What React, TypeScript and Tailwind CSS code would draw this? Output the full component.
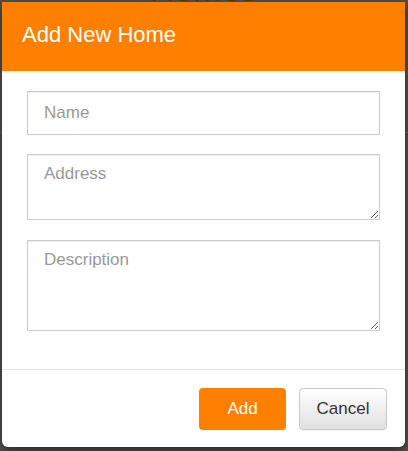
import React from "react"

export default function App() {
  return (
    <div className="relative w-[408px] h-[451px] overflow-hidden bg-[#505050] font-['Liberation_Sans',Arial,sans-serif]">
      {/* page behind the overlay */}
      <div className="absolute left-0 right-0 top-[-26px] text-center text-[34px] leading-[30px] text-[#6b3600]">
        Homes
      </div>
      <div className="absolute left-0 right-0 top-[132px] h-px bg-[#646464]" />

      <div className="relative pl-[2px] pt-[2px]">
        <div className="w-[403px] bg-white rounded-b-[6px] shadow-[0_3px_9px_rgba(0,0,0,0.5)]">
          <div className="h-[69px] bg-[#ff8000] flex items-center pl-[20px] pb-[5px] text-white text-[22px]">
            Add New Home
          </div>

          <div className="flex flex-col px-[25px] pt-[20px] pb-[38px] gap-[19px]">
            <input
              placeholder="Name"
              className="h-[44px] border border-[#ccc] px-[16px] text-[17px] text-[#555] placeholder:text-[#999] shadow-[inset_0_1px_1px_rgba(0,0,0,0.075)] outline-none"
            />
            <textarea
              placeholder="Address"
              className="h-[66px] border border-[#ccc] px-[16px] pt-[7px] text-[17px] leading-[24px] text-[#555] placeholder:text-[#999] shadow-[inset_0_1px_1px_rgba(0,0,0,0.075)] outline-none"
            />
            <textarea
              placeholder="Description"
              className="mt-px h-[91px] border border-[#ccc] px-[16px] pt-[7px] text-[17px] leading-[24px] text-[#555] placeholder:text-[#999] shadow-[inset_0_1px_1px_rgba(0,0,0,0.075)] outline-none"
            />
          </div>

          <div className="border-t border-[#e5e5e5] flex justify-end gap-[13px] pt-[18px] pb-[17px] pr-[18px]">
            <button className="w-[87px] h-[42px] rounded-[4px] bg-[#ff8000] text-white text-[17px]">
              Add
            </button>
            <button className="w-[88px] h-[42px] rounded-[4px] border border-[#c8c8c8] bg-gradient-to-b from-white to-[#e0e0e0] text-[#333] text-[17px] shadow-[0_1px_1px_rgba(0,0,0,0.05)]">
              Cancel
            </button>
          </div>
        </div>
      </div>
    </div>
  )
}
